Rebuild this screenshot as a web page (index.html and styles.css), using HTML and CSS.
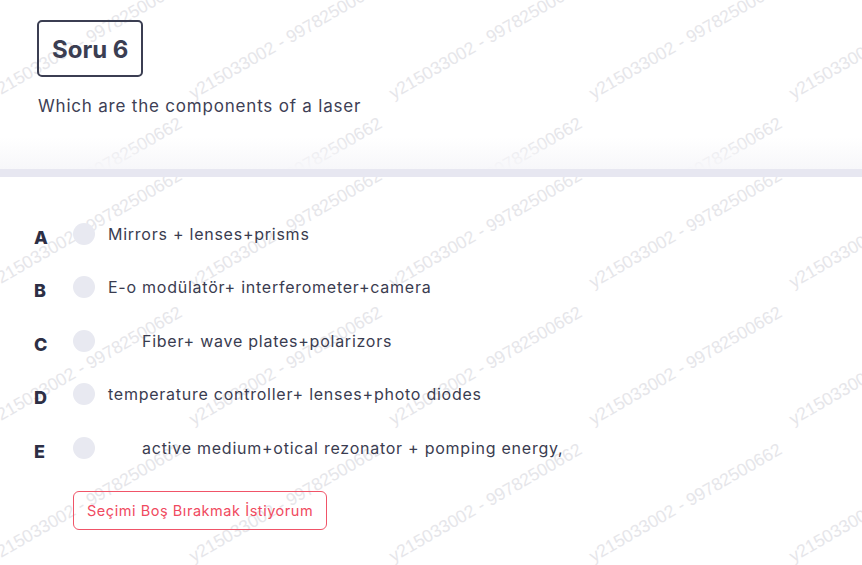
FILE: index.html
```html
<!DOCTYPE html>
<html lang="tr">
<head>
<meta charset="utf-8">
<title>Soru 6</title>
<link rel="stylesheet" href="styles.css">
</head>
<body>
<div class="page">
  <section class="head">
    <div class="wm wm-head" aria-hidden="true">
      <span>y215033002 - 99782500662</span><span>y215033002 - 99782500662</span><span>y215033002 - 99782500662</span><span>y215033002 - 99782500662</span><span>y215033002 - 99782500662</span>
      <span>y215033002 - 99782500662</span><span>y215033002 - 99782500662</span><span>y215033002 - 99782500662</span><span>y215033002 - 99782500662</span><span>y215033002 - 99782500662</span>
      <span>y215033002 - 99782500662</span><span>y215033002 - 99782500662</span><span>y215033002 - 99782500662</span><span>y215033002 - 99782500662</span><span>y215033002 - 99782500662</span>
    </div>
    <div class="fade"></div>
    <div class="head-content">
      <div class="soru">Soru 6</div>
      <p class="question">Which are the components of a laser</p>
    </div>
  </section>
  <div class="bar"></div>
  <section class="body">
    <div class="wm wm-body" aria-hidden="true">
      <span>y215033002 - 99782500662</span><span>y215033002 - 99782500662</span><span>y215033002 - 99782500662</span><span>y215033002 - 99782500662</span><span>y215033002 - 99782500662</span>
      <span>y215033002 - 99782500662</span><span>y215033002 - 99782500662</span><span>y215033002 - 99782500662</span><span>y215033002 - 99782500662</span><span>y215033002 - 99782500662</span>
      <span>y215033002 - 99782500662</span><span>y215033002 - 99782500662</span><span>y215033002 - 99782500662</span><span>y215033002 - 99782500662</span><span>y215033002 - 99782500662</span>
      <span>y215033002 - 99782500662</span><span>y215033002 - 99782500662</span><span>y215033002 - 99782500662</span><span>y215033002 - 99782500662</span><span>y215033002 - 99782500662</span>
    </div>
    <div class="body-content">
      <ul class="options">
        <li class="option"><span class="letter">A</span><span class="radio"></span><span class="text">Mirrors + lenses+prisms</span></li>
        <li class="option"><span class="letter">B</span><span class="radio"></span><span class="text">E-o modülatör+ interferometer+camera</span></li>
        <li class="option"><span class="letter">C</span><span class="radio"></span><span class="text indent">Fiber+ wave plates+polarizors</span></li>
        <li class="option"><span class="letter">D</span><span class="radio"></span><span class="text">temperature controller+ lenses+photo diodes</span></li>
        <li class="option"><span class="letter">E</span><span class="radio"></span><span class="text indent">active medium+otical rezonator + pomping energy,</span></li>
      </ul>
      <button class="skip" type="button">Seçimi Boş Bırakmak İstiyorum</button>
    </div>
  </section>
</div>
</body>
</html>
```
FILE: styles.css
```css
* { box-sizing: border-box; }
html, body { margin: 0; padding: 0; background: #ffffff; }
body {
  font-family: "Inter", "Open Sans", sans-serif;
  color: #3a3c50;
  width: 862px;
  height: 565px;
  overflow: hidden;
}
.page { display: flex; flex-direction: column; }

.head {
  position: relative;
  height: 169px;
  overflow: hidden;
}
.body {
  position: relative;
  height: 388px;
  overflow: hidden;
}

.wm {
  position: absolute;
  left: -5px;
  display: grid;
  grid-template-columns: repeat(5, 200px);
  grid-auto-rows: 137px;
  pointer-events: none;
  z-index: 0;
}
.wm-head { top: -52px; }
.wm-body { top: -40px; }
.wm span {
  display: block;
  font-family: "Liberation Sans", Arial, sans-serif;
  font-size: 17.5px;
  line-height: 17px;
  height: 17px;
  white-space: nowrap;
  color: #e6e6ea;
  transform-origin: 0 100%;
  transform: rotate(-30deg);
}

.fade {
  position: absolute;
  left: 0;
  right: 0;
  bottom: 0;
  height: 32px;
  background: linear-gradient(to bottom, rgba(247,247,250,0), rgba(247,247,250,1));
  z-index: 1;
}

.head-content {
  position: relative;
  z-index: 2;
  padding: 20px 0 0 37px;
}
.soru {
  display: inline-flex;
  align-items: center;
  height: 57px;
  padding: 1px 13px 0;
  border: 2px solid #3b3e52;
  border-radius: 5px;
  font-size: 24px;
  font-weight: 700;
  color: #3b3e52;
}
.question {
  margin: 16px 0 0 1px;
  font-size: 17px;
  line-height: 26px;
  letter-spacing: 0.8px;
  color: #3e4055;
}

.bar {
  height: 8px;
  background: #e7e7f1;
}

.body-content {
  position: relative;
  z-index: 2;
  padding: 30px 0 0 0;
}
.options {
  list-style: none;
  margin: 0;
  padding: 0;
}
.option {
  display: flex;
  align-items: center;
  height: 53.5px;
}
.letter {
  width: 73px;
  padding-left: 34px;
  padding-top: 7px;
  font-size: 18px;
  font-weight: 800;
  color: #2d2f45;
}
.radio {
  width: 22px;
  height: 22px;
  border-radius: 50%;
  background: #e8e9f1;
  flex: none;
}
.text {
  margin-left: 13px;
  font-size: 16px;
  letter-spacing: 0.75px;
  color: #3a3c50;
}
.text.indent { margin-left: 47px; }

.skip {
  margin: 16px 0 0 73px;
  height: 39px;
  padding: 0 13px;
  border: 1px solid #f05468;
  border-radius: 6px;
  background: transparent;
  font-family: inherit;
  font-size: 14.5px;
  letter-spacing: 0.55px;
  color: #f04a60;
  cursor: pointer;
}
```
